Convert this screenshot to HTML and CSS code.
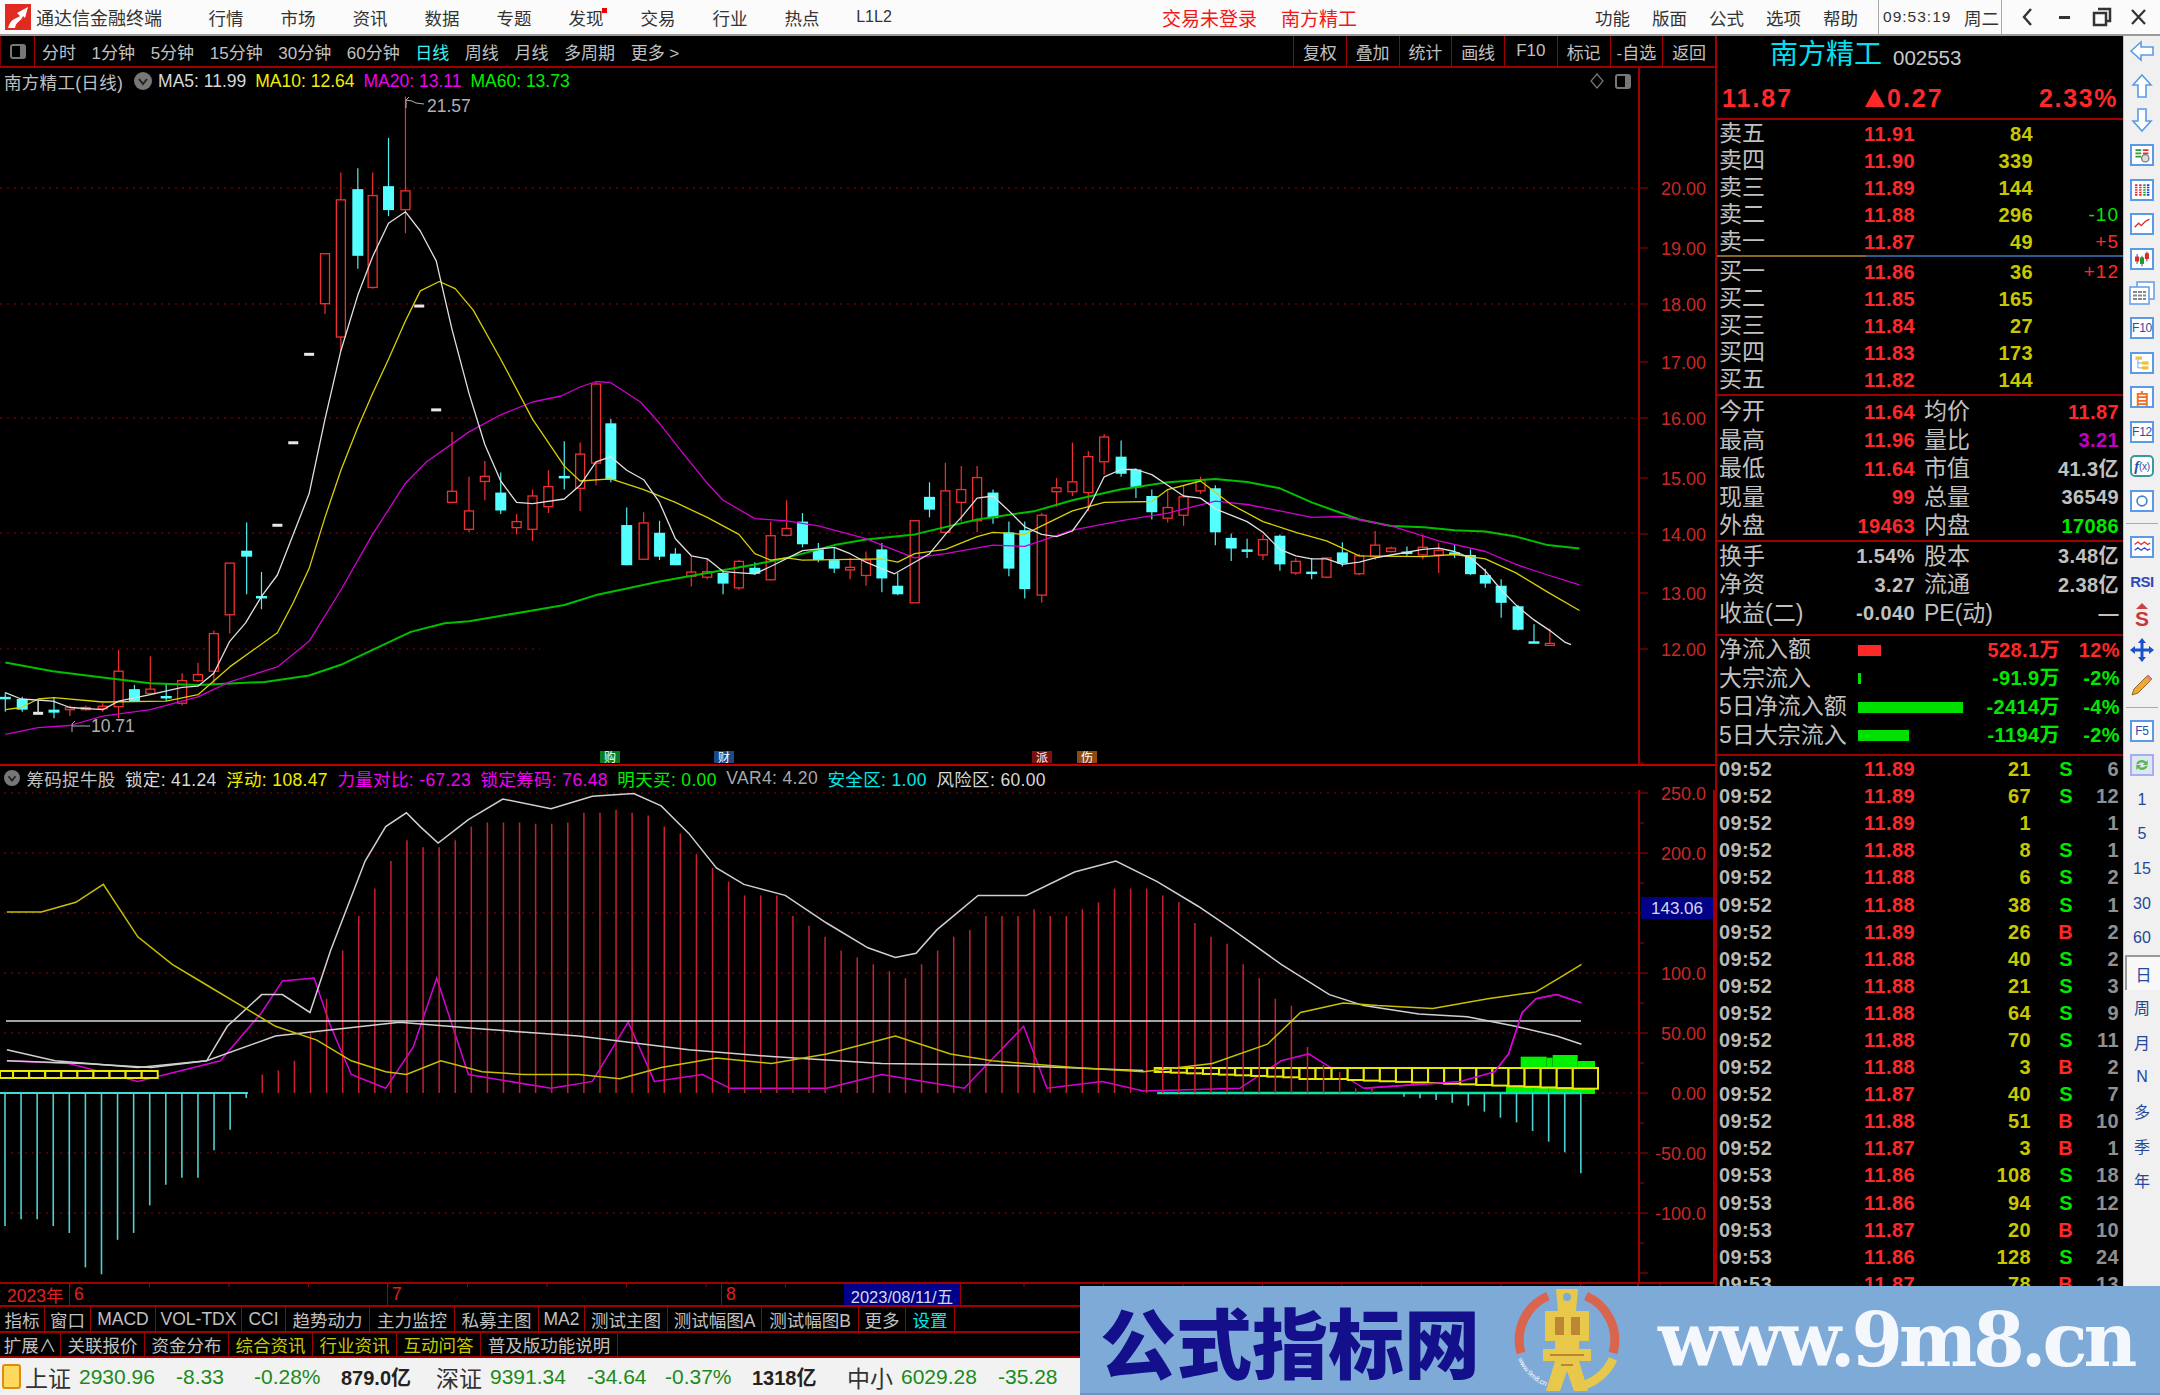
FILE: index.html
```html
<!DOCTYPE html>
<html lang="zh-CN">
<head>
  <meta charset="UTF-8" />
  <title>通达信金融终端</title>
  <link rel="stylesheet" href="styles.css">
</head>
<body>
  <div class="app">
    <div class="topbar">
      <div class="brand">
        <svg class="brand-logo" width="26" height="26" viewBox="0 0 26 26">
          <rect width="26" height="26" fill="#e02a22"/>
          <path d="M3 24 C6 14 11 15 15 12 L12 9 L23 3 L20 14 L18 12 C16 18 11 17 10 24 Z" fill="#fff"/>
        </svg>
        <span>通达信金融终端</span>
      </div>
      <div class="menu">
        <span>行情</span><span>市场</span><span>资讯</span><span>数据</span><span>专题</span>
        <span class="has-dot">发现<i class="dot"></i></span>
        <span>交易</span><span>行业</span><span>热点</span><span class="l1l2">L1L2</span>
      </div>
      <div class="trade-status"><span>交易未登录</span><span>南方精工</span></div>
      <div class="menu-right"><span>功能</span><span>版面</span><span>公式</span><span>选项</span><span>帮助</span></div>
      <div class="clock"><span class="clock-time">09:53:19</span><span>周二</span></div>
      <div class="win-btns">
        <svg width="37" height="34" viewBox="0 0 37 34"><path d="M22 9 L15 17 L22 25" fill="none" stroke="#333" stroke-width="2.4"/></svg>
        <svg width="37" height="34" viewBox="0 0 37 34"><rect x="13" y="16" width="11" height="3" fill="#333"/></svg>
        <svg width="37" height="34" viewBox="0 0 37 34"><path d="M15 9 H27 V21 H23 M11 13 H23 V25 H11 Z" fill="none" stroke="#333" stroke-width="2.5"/></svg>
        <svg width="37" height="34" viewBox="0 0 37 34"><path d="M12 10 L25 24 M25 10 L12 24" stroke="#333" stroke-width="2.2"/></svg>
      </div>
    </div>

    <div class="workspace">
      <div class="charts">
        <div class="toolbar">
          <div class="panel-toggle"><i></i></div>
          <div class="periods">
            <span>分时</span><span>1分钟</span><span>5分钟</span><span>15分钟</span><span>30分钟</span><span>60分钟</span>
            <span class="active">日线</span><span>周线</span><span>月线</span><span>多周期</span><span>更多 &gt;</span>
          </div>
          <div class="tools">
            <span>复权</span><span>叠加</span><span>统计</span><span>画线</span><span>F10</span><span>标记</span><span>-自选</span><span>返回</span>
          </div>
        </div>

        <div class="legend">
          <span class="legend-name">南方精工(日线)</span>
          <svg class="legend-btn" width="18" height="18" viewBox="0 0 18 18"><circle cx="9" cy="9" r="9" fill="#777"/><path d="M5 7 L9 12 L13 7" fill="none" stroke="#222" stroke-width="2"/></svg>
          <span class="c-white">MA5: 11.99</span>
          <span class="c-yellow">MA10: 12.64</span>
          <span class="c-magenta">MA20: 13.11</span>
          <span class="c-green">MA60: 13.73</span>
          <span class="legend-icons">
            <svg width="16" height="18" viewBox="0 0 16 18"><path d="M8 2 L14 9 L8 16 L2 9 Z" fill="none" stroke="#777" stroke-width="1.2"/></svg>
            <i class="mini-toggle"></i>
          </span>
        </div>
        <svg id="main-chart" class="pane" width="1715" height="670"></svg>

        <div class="legend legend-low">
          <svg class="legend-btn" width="16" height="16" viewBox="0 0 18 18"><circle cx="9" cy="9" r="9" fill="#777"/><path d="M5 7 L9 12 L13 7" fill="none" stroke="#222" stroke-width="2"/></svg>
          <span class="legend-name">筹码捉牛股</span>
          <span class="c-white">锁定: 41.24</span>
          <span class="c-yellow">浮动: 108.47</span>
          <span class="c-magenta">力量对比: -67.23</span>
          <span class="c-magenta">锁定筹码: 76.48</span>
          <span class="c-green">明天买: 0.00</span>
          <span class="c-gray">VAR4: 4.20</span>
          <span class="c-cyan">安全区: 1.00</span>
          <span class="c-white">风险区: 60.00</span>
        </div>
        <svg id="low-chart" class="pane" width="1715" height="492"></svg>

        <div class="timeline">
          <span class="t-cell t-year">2023年</span>
          <span class="t-cell t-june">6</span>
          <span class="t-cell t-july">7</span>
          <span class="t-cell t-aug">8</span>
          <span class="t-date">2023/08/11/五</span>
          <span class="t-rest"></span>
        </div>
        <div class="tabs tabs-one">
          <span class="w45">指标</span><span class="w46">窗口</span><span class="w65">MACD</span><span class="w86">VOL-TDX</span><span class="w44">CCI</span>
          <span class="w84">趋势动力</span><span class="w85">主力监控</span><span class="w84">私募主图</span><span class="w46">MA2</span><span class="w83">测试主图</span>
          <span class="w94">测试幅图A</span><span class="w97">测试幅图B</span><span class="w47">更多</span><span class="w49 c-cyan">设置</span>
        </div>
        <div class="tabs tabs-two">
          <span class="w61">扩展∧</span><span class="w84">关联报价</span><span class="w84">资金分布</span>
          <span class="w84 c-olive">综合资讯</span><span class="w84 c-olive">行业资讯</span><span class="w84 c-olive">互动问答</span>
          <span class="w137">普及版功能说明</span>
        </div>
      </div>

      <div class="quote">
        <div class="q-title"><span class="q-name">南方精工</span><span class="q-code">002553</span></div>
        <div class="q-price"><span>11.87</span><span><i class="up"></i>0.27</span><span>2.33%</span></div>

        <div class="book">
          <div class="book-row"><span>卖五</span><b class="red">11.91</b><b class="olive">84</b><span></span></div>
          <div class="book-row"><span>卖四</span><b class="red">11.90</b><b class="olive">339</b><span></span></div>
          <div class="book-row"><span>卖三</span><b class="red">11.89</b><b class="olive">144</b><span></span></div>
          <div class="book-row"><span>卖二</span><b class="red">11.88</b><b class="olive">296</b><em class="green">-10</em></div>
          <div class="book-row"><span>卖一</span><b class="red">11.87</b><b class="olive">49</b><em class="red">+5</em></div>
        </div>
        <div class="book-sep"></div>
        <div class="book book-buy">
          <div class="book-row"><span>买一</span><b class="red">11.86</b><b class="olive">36</b><em class="red">+12</em></div>
          <div class="book-row"><span>买二</span><b class="red">11.85</b><b class="olive">165</b><span></span></div>
          <div class="book-row"><span>买三</span><b class="red">11.84</b><b class="olive">27</b><span></span></div>
          <div class="book-row"><span>买四</span><b class="red">11.83</b><b class="olive">173</b><span></span></div>
          <div class="book-row"><span>买五</span><b class="red">11.82</b><b class="olive">144</b><span></span></div>
        </div>

        <div class="stats stats-one">
          <div class="stat-row"><span>今开</span><b class="red">11.64</b><span class="lab2">均价</span><b class="red">11.87</b></div>
          <div class="stat-row"><span>最高</span><b class="red">11.96</b><span class="lab2">量比</span><b class="purple">3.21</b></div>
          <div class="stat-row"><span>最低</span><b class="red">11.64</b><span class="lab2">市值</span><b class="gray">41.3亿</b></div>
          <div class="stat-row"><span>现量</span><b class="red">99</b><span class="lab2">总量</span><b class="gray">36549</b></div>
          <div class="stat-row"><span>外盘</span><b class="red">19463</b><span class="lab2">内盘</span><b class="green">17086</b></div>
        </div>
        <div class="stats stats-two">
          <div class="stat-row"><span>换手</span><b class="gray">1.54%</b><span class="lab2">股本</span><b class="gray">3.48亿</b></div>
          <div class="stat-row"><span>净资</span><b class="gray">3.27</b><span class="lab2">流通</span><b class="gray">2.38亿</b></div>
          <div class="stat-row"><span class="nowrap">收益(二)</span><b class="gray">-0.040</b><span class="lab2 nowrap">PE(动)</span><b class="gray">—</b></div>
        </div>

        <div class="flows">
          <div class="flow-row"><span>净流入额</span><i class="flow-bar bg-red" style="width:23px"></i><b class="red">528.1万</b><b class="red">12%</b></div>
          <div class="flow-row"><span>大宗流入</span><i class="flow-bar bg-green" style="width:3px"></i><b class="green">-91.9万</b><b class="green">-2%</b></div>
          <div class="flow-row"><span>5日净流入额</span><i class="flow-bar bg-green" style="width:105px"></i><b class="green">-2414万</b><b class="green">-4%</b></div>
          <div class="flow-row"><span>5日大宗流入</span><i class="flow-bar bg-green" style="width:51px"></i><b class="green">-1194万</b><b class="green">-2%</b></div>
        </div>

        <div class="trades">
          <div class="trade"><b>09:52</b><b class="red">11.89</b><b class="olive">21</b><b class="green">S</b><b class="dim">6</b></div>
          <div class="trade"><b>09:52</b><b class="red">11.89</b><b class="olive">67</b><b class="green">S</b><b class="dim">12</b></div>
          <div class="trade"><b>09:52</b><b class="red">11.89</b><b class="olive">1</b><b></b><b class="dim">1</b></div>
          <div class="trade"><b>09:52</b><b class="red">11.88</b><b class="olive">8</b><b class="green">S</b><b class="dim">1</b></div>
          <div class="trade"><b>09:52</b><b class="red">11.88</b><b class="olive">6</b><b class="green">S</b><b class="dim">2</b></div>
          <div class="trade"><b>09:52</b><b class="red">11.88</b><b class="olive">38</b><b class="green">S</b><b class="dim">1</b></div>
          <div class="trade"><b>09:52</b><b class="red">11.89</b><b class="olive">26</b><b class="red">B</b><b class="dim">2</b></div>
          <div class="trade"><b>09:52</b><b class="red">11.88</b><b class="olive">40</b><b class="green">S</b><b class="dim">2</b></div>
          <div class="trade"><b>09:52</b><b class="red">11.88</b><b class="olive">21</b><b class="green">S</b><b class="dim">3</b></div>
          <div class="trade"><b>09:52</b><b class="red">11.88</b><b class="olive">64</b><b class="green">S</b><b class="dim">9</b></div>
          <div class="trade"><b>09:52</b><b class="red">11.88</b><b class="olive">70</b><b class="green">S</b><b class="dim">11</b></div>
          <div class="trade"><b>09:52</b><b class="red">11.88</b><b class="olive">3</b><b class="red">B</b><b class="dim">2</b></div>
          <div class="trade"><b>09:52</b><b class="red">11.87</b><b class="olive">40</b><b class="green">S</b><b class="dim">7</b></div>
          <div class="trade"><b>09:52</b><b class="red">11.88</b><b class="olive">51</b><b class="red">B</b><b class="dim">10</b></div>
          <div class="trade"><b>09:52</b><b class="red">11.87</b><b class="olive">3</b><b class="red">B</b><b class="dim">1</b></div>
          <div class="trade"><b>09:53</b><b class="red">11.86</b><b class="olive">108</b><b class="green">S</b><b class="dim">18</b></div>
          <div class="trade"><b>09:53</b><b class="red">11.86</b><b class="olive">94</b><b class="green">S</b><b class="dim">12</b></div>
          <div class="trade"><b>09:53</b><b class="red">11.87</b><b class="olive">20</b><b class="red">B</b><b class="dim">10</b></div>
          <div class="trade"><b>09:53</b><b class="red">11.86</b><b class="olive">128</b><b class="green">S</b><b class="dim">24</b></div>
          <div class="trade"><b>09:53</b><b class="red">11.87</b><b class="olive">78</b><b class="red">B</b><b class="dim">13</b></div>
        </div>
      </div>

      <div class="sidebar">
        <div class="side-item"><svg width="26" height="22" viewBox="0 0 26 22"><path d="M2 11 L12 2 V7 H24 V15 H12 V20 Z" fill="#fff" stroke="#5a9ae6" stroke-width="1.6"/></svg></div>
        <div class="side-item"><svg width="22" height="26" viewBox="0 0 22 26"><path d="M11 2 L20 12 H15 V24 H7 V12 H2 Z" fill="#fff" stroke="#5a9ae6" stroke-width="1.6"/></svg></div>
        <div class="side-item"><svg width="22" height="26" viewBox="0 0 22 26"><path d="M11 24 L20 14 H15 V2 H7 V14 H2 Z" fill="#fff" stroke="#5a9ae6" stroke-width="1.6"/></svg></div>
        <div class="side-item"><svg class="ibox-svg" width="22" height="22" viewBox="0 0 22 22"><path d="M3 5 H10 M3 9 H10 M3 13 H10" stroke="#2a9a3a" stroke-width="2"/><path d="M12 5 H19 M12 9 H19" stroke="#e03030" stroke-width="2"/><circle cx="15" cy="15" r="4.5" fill="#ddd" stroke="#777" stroke-width="1.5"/></svg></div>
        <div class="side-item"><svg class="ibox-svg" width="22" height="22" viewBox="0 0 22 22"><path d="M4 4 V18" stroke="#e03030" stroke-width="3" stroke-dasharray="2 1"/><path d="M9 4 V18" stroke="#e03030" stroke-width="3" stroke-dasharray="2 1"/><path d="M14 4 V18" stroke="#2a9a3a" stroke-width="3" stroke-dasharray="2 1"/><path d="M18.5 4 V18" stroke="#2040d0" stroke-width="3" stroke-dasharray="2 1"/></svg></div>
        <div class="side-item"><svg class="ibox-svg" width="22" height="22" viewBox="0 0 22 22"><path d="M2 15 L7 10 L10 13 L15 8 L20 5" fill="none" stroke="#e02828" stroke-width="1.6"/></svg></div>
        <div class="side-item"><svg class="ibox-svg" width="22" height="22" viewBox="0 0 22 22"><path d="M5 5 V17 M11 7 V20 M17 2 V14" stroke="#222"/><rect x="2.5" y="8" width="5" height="6" fill="#e02828"/><rect x="8.5" y="9" width="5" height="8" fill="#1a9a30"/><rect x="14.5" y="4" width="5" height="7" fill="#e02828"/></svg></div>
        <div class="side-item"><svg width="26" height="24" viewBox="0 0 26 24"><rect x="8" y="1" width="17" height="17" fill="#fff" stroke="#6aa2ea" stroke-width="1.6"/><rect x="1" y="6" width="19" height="17" fill="#fff" stroke="#6aa2ea" stroke-width="1.6"/><path d="M4 11 H17 M4 14.5 H17 M4 18 H17" stroke="#888" stroke-width="2" stroke-dasharray="4 1"/></svg></div>
        <div class="side-item"><span class="ibox">F10</span></div>
        <div class="side-item"><svg class="ibox-svg" width="22" height="22" viewBox="0 0 22 22"><rect x="3" y="3" width="8" height="4" fill="#f0c040"/><rect x="11" y="9" width="8" height="4" fill="#f0c040"/><rect x="11" y="15" width="8" height="4" fill="#f0c040"/><path d="M6 7 V17 H11 M6 11 H11" fill="none" stroke="#5a9ae6"/></svg></div>
        <div class="side-item"><span class="ibox ibox-orange">自</span></div>
        <div class="side-item"><span class="ibox">F12</span></div>
        <div class="side-item"><span class="ibox ibox-teal"><em>f</em>(x)</span></div>
        <div class="side-item"><svg class="ibox-svg" width="22" height="22" viewBox="0 0 22 22"><circle cx="11" cy="11" r="6" fill="none" stroke="#3f80d8" stroke-width="2"/></svg></div>
        <div class="side-div"></div>
        <div class="side-item"><svg class="ibox-svg" width="22" height="22" viewBox="0 0 22 22"><path d="M2 8 L6 5 L10 8 L14 5 L18 8 L21 6" fill="none" stroke="#e02828" stroke-width="1.5"/><path d="M2 15 L6 12 L10 15 L14 12 L18 15 L21 13" fill="none" stroke="#3040d0" stroke-width="1.5"/></svg></div>
        <div class="side-item"><span class="side-rsi">RSI</span></div>
        <div class="side-item side-dollar"><svg width="14" height="6" viewBox="0 0 14 6"><path d="M7 0 L13 6 H1 Z" fill="#d04040"/></svg><span class="side-s">S</span></div>
        <div class="side-item"><svg width="24" height="24" viewBox="0 0 24 24"><path d="M12 0 L16 5 H13.5 V10.5 H19 V8 L24 12 L19 16 V13.5 H13.5 V19 H16 L12 24 L8 19 H10.5 V13.5 H5 V16 L0 12 L5 8 V10.5 H10.5 V5 H8 Z" fill="#1a50c8"/></svg></div>
        <div class="side-item"><svg width="24" height="24" viewBox="0 0 24 24"><path d="M18 2 L22 6 L8 20 L2 22 L4 16 Z" fill="#f0a830" stroke="#8a6a30"/><path d="M18 2 L22 6 L20 8 L16 4 Z" fill="#e08080"/></svg></div>
        <div class="side-div"></div>
        <div class="side-item"><span class="ibox">F5</span></div>
        <div class="side-item"><svg class="ibox-svg ibox-lav" width="22" height="22" viewBox="0 0 22 22"><path d="M4 10 C5 5 12 3 16 7 L18 5 V11 H12 L14 9 C11 7 8 8 7 10 Z" fill="#5ab85a"/><path d="M18 12 C17 17 10 19 6 15 L4 17 V11 H10 L8 13 C11 15 14 14 15 12 Z" fill="#5ab85a"/></svg></div>
        <div class="side-item side-txt">1</div>
        <div class="side-item side-txt">5</div>
        <div class="side-item side-txt">15</div>
        <div class="side-item side-txt">30</div>
        <div class="side-item side-txt">60</div>
        <div class="side-item side-txt side-sel">日</div>
        <div class="side-item side-txt">周</div>
        <div class="side-item side-txt">月</div>
        <div class="side-item side-txt">N</div>
        <div class="side-item side-txt">多</div>
        <div class="side-item side-txt">季</div>
        <div class="side-item side-txt">年</div>
      </div>
    </div>

    <div class="statusbar">
      <i class="status-icon"></i>
      <div class="index-group">
        <span class="idx-name">上证</span><span class="idx-val">2930.96</span><span class="idx-chg">-8.33</span><span class="idx-pct">-0.28%</span><span class="idx-amt">879.0亿</span>
      </div>
      <div class="index-group">
        <span class="idx-name">深证</span><span class="idx-val">9391.34</span><span class="idx-chg">-34.64</span><span class="idx-pct">-0.37%</span><span class="idx-amt">1318亿</span>
      </div>
      <div class="index-group">
        <span class="idx-name">中小</span><span class="idx-val">6029.28</span><span class="idx-chg">-35.28</span>
      </div>
    </div>

    <div class="banner">
      <span class="banner-title">公式指标网</span>
      <svg class="banner-logo" width="106" height="106" viewBox="0 0 106 106">
        <path d="M7 66 A48 48 0 0 1 34 9" fill="none" stroke="#d9654e" stroke-width="9"/>
        <path d="M72 9 A48 48 0 0 1 99 66" fill="none" stroke="#d9654e" stroke-width="9"/>
        <path d="M99 72 A48 48 0 0 1 62 100" fill="none" stroke="#e8c84a" stroke-width="9"/>
        <path d="M42 2 H64 L62 24 H75 V54 H65 V62 H77 V74 H65 L74 104 H60 L53 84 L46 104 H32 L41 74 H29 V62 H41 V54 H31 V24 H44 Z" fill="#e8c84a"/>
        <circle cx="53" cy="10" r="4" fill="#7eaad8"/>
        <path d="M41 30 H50 V48 H41 Z M57 30 H66 V48 H57 Z" fill="#b0762c" opacity=".8"/>
        <path d="M36 68 H70 M47 78 H59" stroke="#b0762c" stroke-width="2" opacity=".8"/>
        <path id="logo-arc" d="M4 72 A50 50 0 0 0 42 102" fill="none"/>
        <text class="logo-url"><textPath href="#logo-arc">www.9m8.cn</textPath></text>
      </svg>
      <span class="banner-url">www.9m8.cn</span>
    </div>
  </div>
  <script src="chart.js"></script>
</body>
</html>
```

FILE: styles.css
```css
html, body {
  margin: 0;
  padding: 0;
  background: #000;
}

.app {
  position: relative;
  width: 2160px;
  height: 1395px;
  overflow: hidden;
  display: flex;
  flex-direction: column;
  color: #c0c0c0;
  font-family: "Liberation Sans", "Noto Sans CJK SC", sans-serif;
}

i, em { font-style: normal; }

/* title bar */
.topbar {
  height: 34px;
  display: flex;
  align-items: center;
  background: #fbfbfb;
  border-bottom: 2px solid #9a9a9a;
  color: #333;
  font-size: 17.5px;
  flex: none;
}

.brand {
  width: 190px;
  flex: none;
  display: flex;
  align-items: center;
  font-size: 18px;
}

.brand-logo { margin: 0 5px 0 5px; }

.menu {
  display: flex;
  align-items: center;
  width: 720px;
  flex: none;
}

.menu span {
  position: relative;
  width: 72px;
  flex: none;
  text-align: center;
}

.dot {
  position: absolute;
  left: 52px;
  top: 3px;
  width: 5px;
  height: 5px;
  background: #f00000;
}

.l1l2 { font-size: 16px; }

.trade-status {
  margin-left: 252px;
  display: flex;
  gap: 24px;
  color: #f01818;
  font-size: 19px;
  flex: none;
}

.menu-right {
  margin-left: 238px;
  display: flex;
  gap: 22px;
  flex: none;
}

.clock {
  margin-left: 20px;
  height: 34px;
  width: 124px;
  flex: none;
  display: flex;
  align-items: center;
  box-sizing: border-box;
  padding-left: 4px;
  border-left: 1px solid #aaa;
  border-right: 1px solid #aaa;
}

.clock-time {
  width: 81px;
  font-size: 15.5px;
  letter-spacing: 1px;
}

.win-btns {
  display: flex;
  margin-left: 7px;
  flex: none;
}

/* main area */
.workspace {
  display: flex;
  height: 1322px;
  flex: none;
}

.charts {
  width: 1715px;
  flex: none;
  display: flex;
  flex-direction: column;
}

.toolbar {
  height: 32px;
  display: flex;
  flex: none;
  box-sizing: border-box;
  border-bottom: 2px solid #a00000;
  font-size: 17px;
}

.panel-toggle {
  width: 35px;
  box-sizing: border-box;
  border-left: 1px solid #800000;
  border-right: 1px solid #a00000;
  display: flex;
  align-items: center;
  justify-content: center;
}

.panel-toggle i, .mini-toggle {
  display: block;
  width: 16px;
  height: 15px;
  box-sizing: border-box;
  border: 2px solid #777;
  border-right-width: 6px;
  border-radius: 3px;
}

.periods {
  display: flex;
  gap: 15.6px;
  align-items: center;
  margin-left: 7px;
  flex: 1;
}

.periods .active { color: #40f0f0; }

.tools { display: flex; }

.tools span {
  width: 52.75px;
  box-sizing: border-box;
  border-left: 1px solid #a00000;
  display: flex;
  align-items: center;
  justify-content: center;
}

/* chart legends */
.legend {
  height: 26px;
  width: 1640px;
  box-sizing: border-box;
  flex: none;
  display: flex;
  align-items: center;
  gap: 9px;
  padding-left: 4px;
  font-size: 17.5px;
  border-right: 2px solid #a00000;
}

.legend-name { margin-right: 0; letter-spacing: .3px; }

.legend-btn {
  flex: none;
  margin: 0 -3px 0 2px;
}

.legend-icons {
  margin-left: auto;
  display: flex;
  align-items: center;
  gap: 10px;
  padding-right: 7px;
}

.legend-low {
  border-top: 2px solid #c00000;
  gap: 9.5px;
  letter-spacing: .35px;
  width: 1715px;
  border-right: none;
  position: relative;
}

.legend-low .legend-btn { margin: 0 -3px 0 0; }

.c-white { color: #d8d8d8; }
.c-yellow { color: #f0f000; }
.c-magenta { color: #f000f0; }
.c-green { color: #00f000; }
.c-gray { color: #a8a8a8; }
.c-cyan { color: #00e8e8; }
.c-olive { color: #c8c800; }

.pane {
  display: block;
  flex: none;
  overflow: visible;
}

.pane text {
  font-family: "Liberation Sans", "Noto Sans CJK SC", sans-serif;
}

/* time axis and tab rows */
.timeline {
  height: 23px;
  flex: none;
  display: flex;
  align-items: center;
  box-sizing: border-box;
  border-top: 2px solid #a00000;
  color: #e02020;
  font-size: 17.5px;
  background: linear-gradient(90deg, #a00000 1px, transparent 1px) 69.5px 0 / 79.5px 3px repeat-x;
}

.t-cell {
  height: 100%;
  box-sizing: border-box;
  border-right: 1px solid #a00000;
  display: flex;
  align-items: center;
  padding-left: 4px;
}

.t-year { width: 70px; padding-left: 7px; }
.t-june { width: 318px; }
.t-july { width: 334px; }
.t-aug { width: 122px; border-right: none; }

.t-date {
  width: 117px;
  height: 100%;
  box-sizing: border-box;
  background: #000088;
  color: #d8d8e8;
  text-align: center;
  font-size: 16.5px;
  border-right: 1px solid #a00000;
}

.t-rest {
  width: 678px;
  height: 100%;
  box-sizing: border-box;
  border-right: 2px solid #a00000;
}

.tabs {
  display: flex;
  flex: none;
  box-sizing: border-box;
  border-top: 2px solid #a00000;
  font-size: 17.5px;
}

.tabs-one { height: 26px; }
.tabs-two { height: 27px; border-bottom: 2px solid #a00000; }

.tabs span {
  box-sizing: border-box;
  border-right: 1px solid #a00000;
  display: flex;
  align-items: center;
  justify-content: center;
  white-space: nowrap;
}

.w44 { width: 44px; }
.w45 { width: 45px; }
.w46 { width: 46px; }
.w47 { width: 47px; }
.w49 { width: 49px; }
.w61 { width: 61px; }
.w65 { width: 65px; }
.w83 { width: 83px; }
.w84 { width: 84px; }
.w85 { width: 85px; }
.w86 { width: 86px; }
.w94 { width: 94px; }
.w97 { width: 97px; }
.w137 { width: 137px; }

/* quote panel */
.quote {
  width: 408px;
  flex: none;
  box-sizing: border-box;
  border-left: 2px solid #a00000;
  overflow: hidden;
  font-size: 23px;
  line-height: 1;
  padding-left: 1px;
}

.red { color: #ff2828; }
.green { color: #00e800; }
.olive { color: #c8c800; }
.purple { color: #c000c0; }
.gray { color: #c0c0c0; }
.dim { color: #909090; }
.bg-red { background: #ff2828; }
.bg-green { background: #00e000; }

.q-title {
  height: 38px;
  display: flex;
  align-items: center;
  padding-left: 52px;
  gap: 11px;
}

.q-name { font-size: 28px; color: #00e0f0; }
.q-code { font-size: 20.5px; color: #c8c8c8; padding-top: 6px; }

.q-price {
  height: 46px;
  margin-left: -1px;
  padding: 4px 5px 0 5px;
  box-sizing: border-box;
  display: grid;
  grid-template-columns: 143px 171px 1fr;
  align-items: center;
  color: #ff2828;
  font-size: 25px;
  font-weight: bold;
  letter-spacing: 2px;
  border-bottom: 2px solid #a00000;
}

.q-price span:last-child { text-align: right; letter-spacing: 1.6px; }

.up {
  display: inline-block;
  border-left: 10px solid transparent;
  border-right: 10px solid transparent;
  border-bottom: 18px solid #ff2828;
  margin-right: 2px;
}

.book b, .book em, .stats b, .flows b, .trade b {
  font-size: 20px;
  letter-spacing: .4px;
  text-align: right;
  white-space: nowrap;
}

.book em { font-size: 19px; letter-spacing: 1px; }

.book-row {
  height: 27px;
  box-sizing: border-box;
  padding-left: 1px;
  display: grid;
  grid-template-columns: 48px 148px 118px 86px;
  align-items: center;
}

.book-sep {
  height: 2px;
  background: linear-gradient(90deg, #8a6a20 149px, #2a5a90 149px);
  margin-left: -1px;
}

.book-buy { padding: 1px 0; }

.stats {
  border-top: 2px solid #a00000;
  margin-left: -1px;
  padding-left: 1px;
}

.stats-one { padding-top: 1.5px; }
.stats-two { padding-bottom: 6px; }

.stat-row {
  height: 28.5px;
  box-sizing: border-box;
  padding-left: 1px;
  display: grid;
  grid-template-columns: 48px 148px 62px 142px;
  align-items: center;
}

.lab2 { padding-left: 9px; }
.nowrap { white-space: nowrap; }

.flows {
  border-top: 2px solid #a00000;
  margin-left: -1px;
  padding: 0 0 4px 1px;
}

.flow-row {
  position: relative;
  height: 28.5px;
  display: grid;
  grid-template-columns: 139px 202px 60px;
  align-items: center;
  padding-left: 1px;
  white-space: nowrap;
}

.flow-row b:first-of-type { grid-column: 2; text-align: right; }

.flow-bar {
  position: absolute;
  left: 140px;
  top: 9px;
  height: 11px;
}

.trades {
  border-top: 2px solid #a00000;
  margin-left: -1px;
}

.trade {
  height: 27.1px;
  display: grid;
  grid-template-columns: 53px 143px 116px 42px 46px;
  align-items: center;
  padding-left: 2px;
  color: #b8b8b8;
}

.trade b:first-child { text-align: left; }

/* right icon strip */
.sidebar {
  width: 37px;
  flex: none;
  box-sizing: border-box;
  background: #f0f0f0;
  border-left: 1px solid #c8c8c8;
  display: flex;
  flex-direction: column;
  color: #24479a;
  overflow: hidden;
}

.side-item {
  height: 34.6px;
  flex: none;
  display: flex;
  align-items: center;
  justify-content: center;
}

.side-item:first-child { margin-top: -2px; }

.side-div {
  height: 1px;
  margin: 5px 2px;
  background: #aaa;
  flex: none;
}

.ibox, .ibox-svg {
  box-sizing: border-box;
  width: 24px;
  height: 22px;
  background: #fff;
  border: 2px solid #5a9ae6;
}

.ibox {
  display: flex;
  align-items: center;
  justify-content: center;
  font-size: 12px;
  color: #2650a8;
  letter-spacing: -.3px;
}

.ibox-orange { color: #f07028; font-size: 15px; font-weight: bold; }
.ibox-teal { border-color: #3a9a9a; border-radius: 5px; font-size: 10px; }
.ibox-teal em { font-size: 15px; font-family: "Liberation Serif", serif; font-style: italic; font-weight: bold; }
.ibox-lav { border-color: #a0b0f0; background: #dfe6f0; }

.side-rsi {
  font-size: 15px;
  font-weight: bold;
  color: #3048b8;
  letter-spacing: -.5px;
}

.side-dollar { flex-direction: column; }

.side-s {
  font-size: 21px;
  line-height: 20px;
  font-weight: bold;
  color: #c83838;
}

.side-txt { font-size: 16px; }

.side-sel {
  background: #f8f8f8;
  border-top: 2px solid #999;
  border-left: 2px solid #999;
  box-sizing: border-box;
  margin-left: 1px;
}

/* bottom indices */
.statusbar {
  height: 37px;
  flex: none;
  display: flex;
  align-items: center;
  background: #f2f2f2;
  color: #1a8a1a;
  font-size: 21px;
  padding-left: 2px;
  box-sizing: border-box;
}

.status-icon {
  width: 19px;
  height: 25px;
  margin-right: 4px;
  box-sizing: border-box;
  border: 2px solid #e08a10;
  background: #ffd860;
  border-radius: 3px;
  flex: none;
}

.index-group {
  display: grid;
  grid-template-columns: 54px 97px 78px 87px 95px;
  flex: none;
  align-items: center;
  white-space: nowrap;
}

.idx-name { font-size: 23px; color: #333; }
.idx-amt { color: #222; font-weight: bold; font-size: 20px; }

/* watermark, sits over the lower right corner */
.banner {
  position: absolute;
  left: 1080px;
  top: 1286px;
  right: 0;
  bottom: 0;
  background: #7eaad8;
  border-bottom: 2px solid #6a94c4;
  box-sizing: border-box;
  display: flex;
  align-items: center;
}

.banner-title {
  margin-left: 20px;
  width: 414px;
  font-size: 76px;
  line-height: 1;
  font-weight: 900;
  color: #14108c;
  font-family: "Noto Sans CJK SC", sans-serif;
  flex: none;
}

.banner-logo { flex: none; }

.banner-url {
  margin-left: 38px;
  font-family: "DejaVu Serif", serif;
  font-weight: bold;
  font-size: 74px;
  letter-spacing: -4px;
  color: #f4f8fc;
  white-space: nowrap;
}

.logo-url {
  font-size: 7px;
  fill: #fff;
  font-family: "Liberation Sans", sans-serif;
}

/* svg chart pieces */
.grid { stroke: #a00000; stroke-width: 1.2; stroke-dasharray: 2 5; }
.axis { stroke: #a00000; stroke-width: 2; }
.tick { stroke: #a00000; stroke-width: 1; }
.axis-label { fill: #c82828; font-size: 18px; text-anchor: end; dominant-baseline: central; }
.price-note { fill: #b0b0b0; font-size: 17.5px; }
.note-line { stroke: #b0b0b0; stroke-width: 1; fill: none; }
.ma { fill: none; stroke-width: 1.3; stroke-linejoin: round; }
.ma5 { stroke: #e0e0e0; }
.ma10 { stroke: #d8d000; }
.ma20 { stroke: #d000d0; }
.ma60 { stroke: #00c000; stroke-width: 2; }
.wick-red { stroke: #f03030; stroke-width: 1.2; }
.wick-cyan { stroke: #50f0f0; stroke-width: 1.2; }
.body-red { fill: #000; stroke: #f03030; stroke-width: 1.3; }
.body-cyan { fill: #54ffff; }
.body-white { fill: #e8e8e8; }
.marker-text { fill: #fff; font-size: 12px; text-anchor: middle; }
.bar-red { stroke: #c82030; stroke-width: 1.5; }
.bar-cyan { stroke: #50d0d0; stroke-width: 1.6; }
.base-line { stroke: #00e8a8; stroke-width: 2.5; }
.base-left { stroke: #40d8d8; stroke-width: 2; }
.band { fill: #000; stroke: #e8e800; stroke-width: 2; }
.fill-green { fill: #00f000; }
.line-white { fill: none; stroke: #d0d0d0; stroke-width: 1.5; }
.line-flat { stroke: #d8d8d8; stroke-width: 1.5; }
.line-yellow { fill: none; stroke: #c8c000; stroke-width: 1.5; }
.line-magenta { fill: none; stroke: #d800d8; stroke-width: 1.5; }
.value-box { fill: #000088; }
.value-text { fill: #d8d8e8; font-size: 17px; text-anchor: middle; dominant-baseline: central; }
```

FILE: chart.js
```js
var NS = 'http://www.w3.org/2000/svg';

function add(svg, tag, attrs, text) {
  var el = document.createElementNS(NS, tag);
  for (var k in attrs) el.setAttribute(k, attrs[k]);
  if (text) el.textContent = text;
  svg.appendChild(el);
  return el;
}

/* ---------- main chart ---------- */
// data was read off at 1660 -> 1568 wide and 2.34x tall, so convert it back
var mx = function (x) { return x / 0.9446; };
var my = function (y) { return y / 2.34 - 4; };

// x, bodyTop, bodyBottom, high, low, type
var candles = [
  [5,1420,1423,1410,1455,'c'],[21,1425,1450,1420,1455,'c'],[36,1455,1458,1430,1460,'w'],[51,1450,1457,1422,1470,'c'],
  [66,1445,1450,1440,1465,'r'],[81,1445,1450,1440,1452,'r'],[97,1442,1448,1435,1455,'r'],[112,1360,1443,1310,1470,'r'],
  [127,1402,1430,1392,1432,'c'],[142,1402,1412,1325,1415,'r'],[157,1418,1421,1390,1430,'c'],[172,1382,1435,1365,1440,'r'],
  [187,1368,1382,1340,1385,'r'],[202,1272,1360,1265,1390,'r'],[217,1107,1228,1107,1272,'r'],[233,1078,1092,1012,1180,'c'],
  [247,1184,1187,1128,1215,'c'],[262,1015,1018,1015,1018,'w'],[277,822,825,822,825,'w'],[292,615,618,615,618,'w'],
  [307,383,500,383,525,'r'],[322,257,578,193,610,'r'],[338,232,388,183,418,'c'],[352,247,462,193,465,'r'],
  [367,225,281,112,295,'c'],[383,236,280,15,335,'r'],[396,502,505,502,505,'w'],[412,745,748,745,748,'w'],
  [427,939,965,800,965,'r'],[443,985,1028,905,1035,'r'],[458,904,916,868,960,'r'],[473,942,984,895,992,'c'],
  [488,1010,1024,992,1040,'r'],[503,950,1028,935,1055,'r'],[518,928,975,890,990,'r'],[533,903,906,822,935,'c'],
  [548,852,932,825,985,'r'],[563,688,873,682,925,'r'],[577,780,912,770,918,'c'],[592,1018,1112,977,1112,'c'],
  [608,1013,1098,988,1098,'r'],[623,1036,1092,1008,1100,'c'],[638,1085,1112,1072,1112,'c'],[653,1128,1138,1090,1162,'r'],
  [668,1127,1140,1095,1145,'r'],[683,1130,1155,1125,1180,'c'],[698,1103,1165,1100,1170,'r'],[713,1118,1132,1105,1135,'c'],
  [728,1043,1146,1010,1148,'r'],[743,1026,1042,960,1045,'r'],[758,1010,1063,990,1070,'c'],[773,1075,1100,1060,1105,'c'],
  [788,1100,1120,1070,1130,'c'],[803,1117,1123,1095,1145,'r'],[818,1100,1136,1080,1160,'r'],[833,1075,1143,1060,1175,'c'],
  [848,1160,1180,1130,1182,'c'],[864,1008,1200,1008,1200,'r'],[878,952,982,918,1000,'c'],[893,938,1035,872,1040,'r'],
  [908,935,965,880,1010,'r'],[923,907,1008,880,1035,'r'],[938,942,1002,935,1015,'c'],[953,1035,1120,1010,1138,'c'],
  [968,1030,1168,1010,1190,'c'],[984,995,1182,990,1200,'r'],[998,931,940,908,975,'r'],[1013,917,940,825,950,'r'],
  [1028,858,942,845,985,'r'],[1043,812,870,805,900,'r'],[1059,858,898,820,905,'c'],[1073,888,930,885,955,'c'],
  [1088,950,988,935,1005,'c'],[1103,977,1002,935,1012,'r'],[1118,952,995,925,1020,'r'],[1134,912,938,905,945,'r'],
  [1148,932,1035,925,1065,'c'],[1163,1048,1073,1038,1102,'c'],[1178,1075,1079,1050,1095,'c'],[1193,1052,1088,1040,1100,'r'],
  [1209,1043,1110,1040,1125,'c'],[1224,1103,1130,1095,1135,'r'],[1239,1127,1130,1095,1145,'c'],[1253,1095,1140,1095,1142,'r'],
  [1268,1082,1108,1058,1115,'c'],[1284,1090,1132,1085,1135,'r'],[1299,1065,1092,1032,1100,'r'],[1314,1072,1080,1068,1082,'r'],
  [1329,1080,1084,1068,1090,'c'],[1344,1070,1088,1040,1098,'r'],[1359,1077,1088,1060,1130,'r'],[1374,1082,1085,1065,1095,'c'],
  [1389,1088,1133,1075,1135,'c'],[1403,1135,1155,1120,1165,'c'],[1418,1160,1200,1145,1235,'c'],[1434,1208,1263,1205,1265,'c'],
  [1449,1290,1293,1250,1293,'c'],[1464,1295,1297,1260,1297,'r']
];

var ma5 = [[5,1410],[20,1425],[50,1430],[66,1445],[97,1450],[112,1430],[142,1415],[172,1398],[187,1395],[202,1365],[217,1290],[232,1247],[247,1185],[262,1135],[277,1040],[292,945],[307,770],[322,610],[338,480],[352,390],[367,312],[383,285],[397,330],[412,400],[427,560],[443,710],[458,830],[473,915],[488,965],[503,968],[533,957],[548,925],[563,870],[577,858],[592,890],[608,912],[623,965],[638,1050],[653,1090],[668,1097],[683,1127],[713,1132],[728,1115],[758,1078],[788,1070],[803,1085],[818,1105],[845,1132],[864,1105],[878,1085],[893,1040],[908,1000],[923,955],[938,950],[953,985],[968,1022],[984,1040],[998,1045],[1013,1032],[1028,980],[1043,905],[1059,888],[1073,888],[1088,900],[1103,925],[1118,950],[1134,955],[1148,980],[1178,1010],[1193,1035],[1209,1075],[1224,1090],[1239,1097],[1253,1097],[1268,1110],[1284,1105],[1299,1095],[1314,1088],[1344,1075],[1359,1072],[1374,1080],[1389,1095],[1403,1125],[1418,1170],[1434,1210],[1449,1240],[1464,1265],[1478,1292],[1484,1298]];
var ma10 = [[5,1450],[20,1445],[36,1425],[51,1422],[97,1432],[157,1430],[187,1415],[217,1350],[262,1270],[277,1200],[292,1120],[307,1000],[322,890],[338,790],[352,710],[367,630],[383,540],[397,470],[415,448],[430,465],[447,515],[473,630],[503,770],[533,880],[548,915],[577,910],[608,935],[638,965],[668,1000],[698,1040],[713,1085],[728,1100],[743,1095],[758,1100],[833,1097],[848,1105],[864,1085],[893,1075],[923,1045],[938,1035],[968,1040],[984,1020],[1013,985],[1043,965],[1088,963],[1103,935],[1134,915],[1163,970],[1193,1010],[1224,1035],[1253,1055],[1284,1090],[1344,1092],[1374,1087],[1403,1097],[1432,1130],[1462,1175],[1492,1218]];
var ma20 = [[5,1508],[36,1492],[66,1487],[97,1465],[142,1450],[187,1420],[217,1385],[262,1350],[292,1290],[322,1170],[352,1040],[383,920],[403,870],[443,800],[473,760],[503,730],[530,716],[548,695],[563,682],[577,685],[605,730],[623,780],[645,850],[668,920],[683,960],[713,1003],[743,1008],[773,1020],[818,1050],[833,1065],[864,1095],[893,1085],[938,1065],[968,1068],[1013,1030],[1058,1008],[1103,990],[1148,962],[1178,970],[1209,985],[1239,1000],[1268,998],[1314,1020],[1359,1055],[1403,1080],[1432,1110],[1462,1135],[1492,1158]];
var ma60 = [[5,1340],[50,1360],[97,1375],[142,1388],[187,1392],[250,1385],[292,1370],[322,1345],[352,1310],[388,1268],[420,1248],[443,1243],[503,1218],[533,1205],[563,1182],[590,1168],[623,1150],[668,1130],[713,1110],[743,1095],[788,1065],[818,1052],[864,1040],[923,1005],[978,985],[1013,960],[1058,935],[1103,918],[1148,910],[1178,917],[1209,932],[1239,965],[1284,1005],[1314,1020],[1345,1023],[1374,1030],[1403,1033],[1432,1045],[1462,1065],[1492,1073]];

function drawMain() {
  var svg = document.getElementById('main-chart');
  var top = 94;

  [[188,1640],[304,1640],[418,1640],[533,1640],[649,540]].forEach(function (g) {
    add(svg, 'line', { x1: 0, x2: g[1], y1: g[0] - top, y2: g[0] - top, class: 'grid' });
  });
  add(svg, 'line', { x1: 1639, x2: 1639, y1: 0, y2: 670, class: 'axis' });

  [['20.00',188],['19.00',248],['18.00',304],['17.00',362],['16.00',418],['15.00',478],['14.00',534],['13.00',593],['12.00',649]].forEach(function (l) {
    add(svg, 'line', { x1: 1639, x2: 1648, y1: l[1] - top, y2: l[1] - top, class: 'tick' });
    add(svg, 'text', { x: 1706, y: l[1] - top + 1, class: 'axis-label' }, l[0]);
  });

  candles.forEach(function (c) {
    var x = mx(c[0]);
    var h = my(c[3]), l = my(c[4]), t = my(c[1]), b = my(c[2]);
    if (c[5] === 'w') {
      add(svg, 'rect', { x: x - 5, y: t, width: 10, height: 3, class: 'body-white' });
      if (l - h > 5) add(svg, 'line', { x1: x, x2: x, y1: h, y2: l, class: 'line-flat' });
      return;
    }
    var red = c[5] === 'r';
    add(svg, 'line', { x1: x, x2: x, y1: h, y2: l, class: red ? 'wick-red' : 'wick-cyan' });
    if (red) add(svg, 'rect', { x: x - 4.5, y: t, width: 9, height: Math.max(b - t, 2), class: 'body-red' });
    else add(svg, 'rect', { x: x - 5.5, y: t, width: 11, height: Math.max(b - t, 2.5), class: 'body-cyan' });
  });

  [[ma60,'ma60'],[ma20,'ma20'],[ma10,'ma10'],[ma5,'ma5']].forEach(function (m) {
    var pts = m[0].map(function (p) { return mx(p[0]).toFixed(1) + ',' + my(p[1]).toFixed(1); }).join(' ');
    add(svg, 'polyline', { points: pts, class: 'ma ' + m[1] });
  });

  // high and low notes
  add(svg, 'path', { d: 'M406 14 V6 L409 3 M406 6 L412 7 L416 9 L424 10', class: 'note-line' });
  add(svg, 'text', { x: 427, y: 18, class: 'price-note' }, '21.57');
  add(svg, 'path', { d: 'M72 638 V630 L75 627 M72 632 H90', class: 'note-line' });
  add(svg, 'text', { x: 91, y: 638, class: 'price-note' }, '10.71');

  // event markers along the bottom of the pane
  [[600,'#0a7a1a','购'],[714,'#1a4a8a','财'],[1032,'#7a1010','派'],[1077,'#8a4a10','伤']].forEach(function (m) {
    add(svg, 'rect', { x: m[0], y: 657, width: 20, height: 12, fill: m[1] });
    add(svg, 'text', { x: m[0] + 10, y: 668, class: 'marker-text' }, m[2]);
  });
}

/* ---------- lower indicator ---------- */
var LOW_TOP = 790;
var ZERO = 1093;
var ly = function (v) { return v - LOW_TOP; };
var barX = function (i) { return 5 + 16.08 * i; };
// s = numbers read from the 1568 wide picture, z = from the 3x crop of the right end
var s = function (v) { return v * 1.3776; };
var zx = function (v) { return 1300 + v / 3; };
var zy = function (v) { return 950 + v / 3; };

var cyanLeft = [890,885,885,890,895,920,925,900,895,875,860,855,855,835,820,797];
var redTops = [780,777,770,750,725,690,665,645,625,610,615,615,610,600,597,597,597,598,598,597,
  590,590,588,590,592,600,605,620,630,640,650,650,650,665,672,680,690,695,700,705,
  710,700,690,680,675,665,665,665,660,665,665,660,655,645,645,645,650,655,670,680,
  685,700,710,725,730,760,773,778,790,790];
var cyanRight = [440,445,450,458,467,485,503,517,543,575,607,670];

var upperLine = [[5,762],[40,770],[100,775],[150,770],[165,745],[190,722],[205,722],[225,735],[240,690],[265,625],[280,600],[295,590],[305,600],[318,612],[340,595],[365,580],[400,587],[430,578],[460,576],[480,585],[500,605],[520,630],[540,642],[570,650],[600,670],[630,688],[650,695],[665,692],[680,675],[710,650],[745,650],[780,633],[810,625],[840,640],[870,658],[895,675],[930,700],[965,722],[990,730],[1030,736],[1065,738],[1100,745],[1130,752],[1148,758]];
var secondLine = [[5,770],[60,772],[110,775],[150,770],[200,752],[290,742],[350,747],[420,752],[500,762],[560,767],[640,772],[720,773],[800,776],[830,777]];
var yellowLine = [[5,662],[30,662],[55,655],[75,642],[100,680],[125,700],[150,715],[175,730],[200,745],[230,755],[255,770],[280,778],[295,780],[320,770],[350,778],[380,780],[420,780],[450,783],[480,775],[520,768],[560,772],[600,765],[650,752],[690,765],[720,770],[780,775],[830,778],[880,772],[920,758],[944,735],[975,728],[1000,730],[1040,732],[1080,725],[1115,720],[1135,708],[1148,700]];
var magentaLine = [[5,770],[50,772],[100,785],[160,770],[190,735],[205,712],[228,710],[240,745],[255,780],[280,790],[300,760],[317,710],[340,780],[400,790],[430,785],[456,742],[475,785],[510,780],[530,790],[600,790],[640,780],[700,790],[743,745],[760,790],[800,785],[830,792],[900,790],[930,770],[950,765],[990,790],[1060,785],[1085,778],[1095,765],[1105,735],[1115,725],[1130,722],[1148,728]];

function polyS(svg, pts, cls) {
  var p = pts.map(function (q) { return s(q[0]).toFixed(1) + ',' + ly(s(q[1])).toFixed(1); }).join(' ');
  add(svg, 'polyline', { points: p, class: cls });
}

function drawLow() {
  var svg = document.getElementById('low-chart');

  [793,853,913,973,1033,1153,1213].forEach(function (y) {
    add(svg, 'line', { x1: 4, x2: 1639, y1: ly(y), y2: ly(y), class: 'grid' });
  });
  add(svg, 'line', { x1: 1595, x2: 1639, y1: ly(ZERO), y2: ly(ZERO), class: 'grid' });
  add(svg, 'line', { x1: 1639, x2: 1639, y1: 0, y2: 492, class: 'axis' });
  add(svg, 'line', { x1: 1714, x2: 1714, y1: 0, y2: 492, class: 'axis' });

  for (var v = -150; v <= 275; v += 25) {
    var ty = ly(ZERO - v * 1.2);
    add(svg, 'line', { x1: 1639, x2: v % 50 === 0 ? 1648 : 1644, y1: ty, y2: ty, class: 'tick' });
  }
  [['250.0',793],['200.0',853],['100.0',973],['50.00',1033],['0.00',1093],['-50.00',1153],['-100.0',1213]].forEach(function (l) {
    add(svg, 'text', { x: 1706, y: ly(l[1]) + 1, class: 'axis-label' }, l[0]);
  });
  add(svg, 'rect', { x: 1641, y: ly(897), width: 72, height: 22, class: 'value-box' });
  add(svg, 'text', { x: 1677, y: ly(908), class: 'value-text' }, '143.06');

  // lines that run behind the bands
  polyS(svg, magentaLine, 'line-magenta');

  // green blocks near the right end
  [[662,740,320],[740,758,323],[758,833,315],[833,885,333]].forEach(function (g) {
    add(svg, 'rect', { x: zx(g[0]), y: ly(zy(g[2])), width: (g[1] - g[0]) / 3, height: ly(1068) - ly(zy(g[2])), class: 'fill-green' });
  });
  [[618,660,398],[660,700,403],[700,745,407],[745,795,410],[795,885,415]].forEach(function (g) {
    add(svg, 'rect', { x: zx(g[0]), y: ly(zy(g[2])), width: (g[1] - g[0]) / 3, height: ly(1094) - ly(zy(g[2])), class: 'fill-green' });
  });

  // hollow yellow band, one box per bar, only at both ends of the pane
  for (var i = 0; i < 99; i++) {
    if (i >= 10 && i < 72) continue;
    var x0 = i === 0 ? 0 : barX(i) - 8;
    var x1 = i === 98 ? 1598 : barX(i) + 8;
    var topY = i < 10 ? 1071 : 1068;
    var bottom = i < 10 ? 1078 : i < 81 ? 1072 + (i - 72) * 0.66 : i < 84 ? 1079 : 1080 + (i - 84) * 0.62;
    add(svg, 'rect', { x: x0, y: ly(topY), width: x1 - x0, height: bottom - topY, class: 'band' });
  }

  add(svg, 'line', { x1: 0, x2: s(180), y1: ly(ZERO), y2: ly(ZERO), class: 'base-left' });
  add(svg, 'line', { x1: s(840), x2: 1581, y1: ly(ZERO), y2: ly(ZERO), class: 'base-line' });

  cyanLeft.forEach(function (b, i) {
    add(svg, 'line', { x1: barX(i), x2: barX(i), y1: ly(ZERO), y2: ly(s(b)), class: 'bar-cyan' });
  });
  redTops.forEach(function (t, i) {
    var x = barX(i + 16);
    add(svg, 'line', { x1: x, x2: x, y1: ly(ZERO), y2: ly(s(t)), class: 'bar-red' });
  });
  cyanRight.forEach(function (b, i) {
    var x = barX(i + 87);
    add(svg, 'line', { x1: x, x2: x, y1: ly(ZERO), y2: ly(zy(b)), class: 'bar-cyan' });
  });

  add(svg, 'line', { x1: 6, x2: 1581, y1: ly(1021), y2: ly(1021), class: 'line-flat' });
  polyS(svg, secondLine, 'line-white');
  polyS(svg, upperLine, 'line-white');
  polyS(svg, yellowLine, 'line-yellow');
  polyS(svg, magentaLine.slice(-8), 'line-magenta');
}

drawMain();
drawLow();
```
